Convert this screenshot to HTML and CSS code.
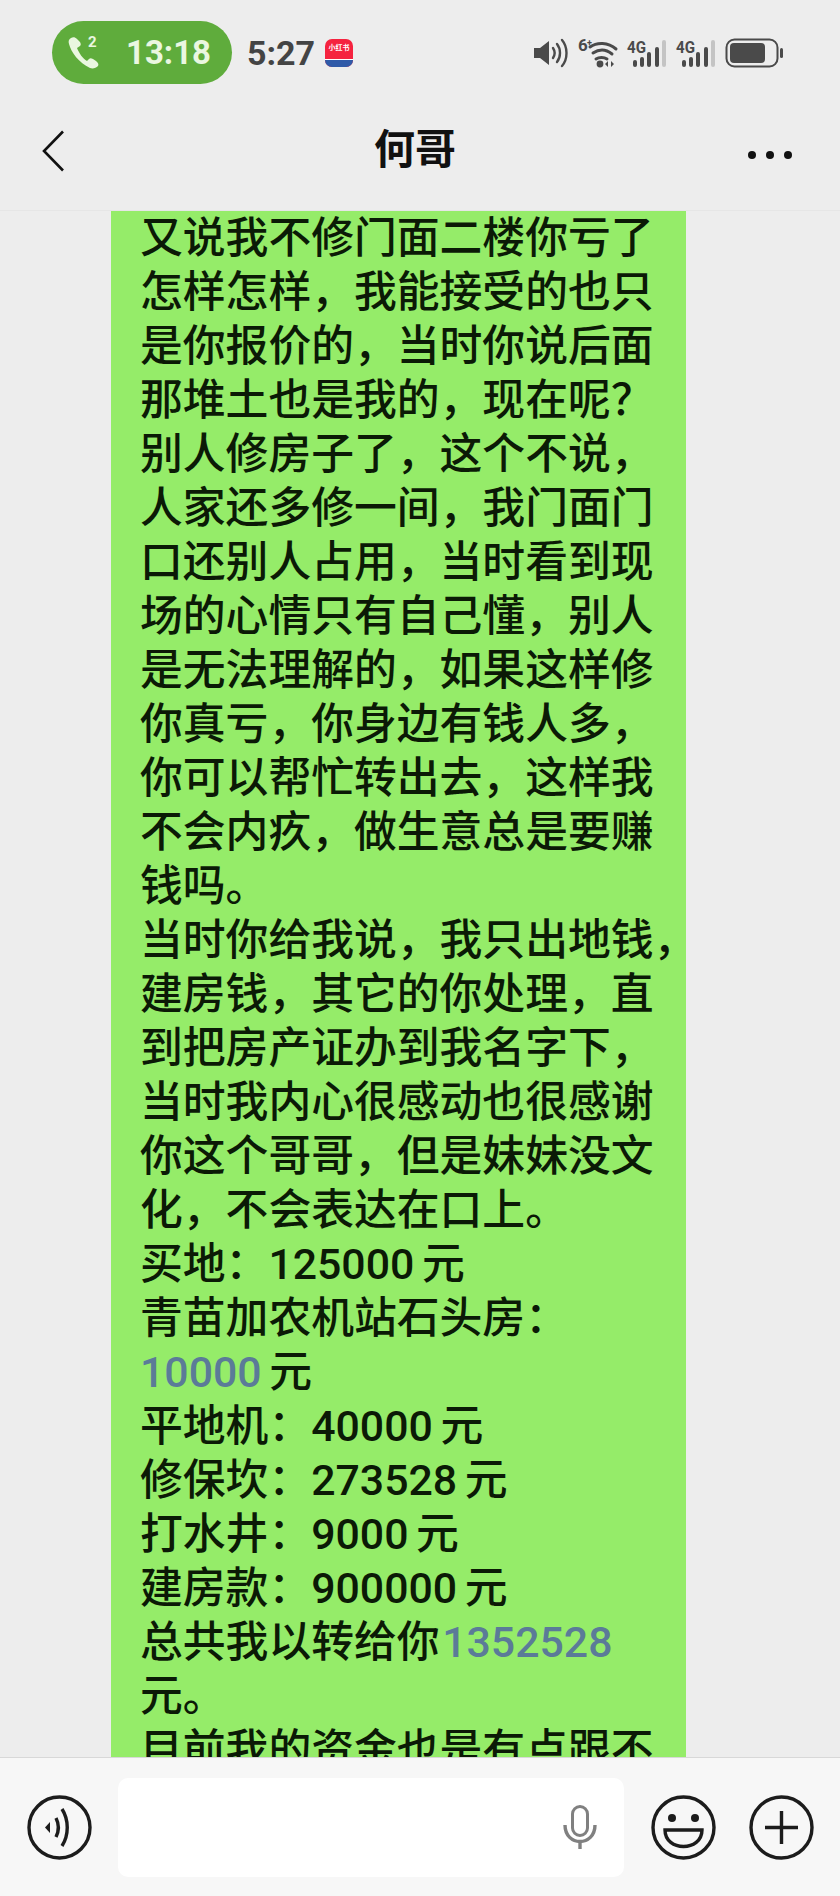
FILE: index.html
```html
<!DOCTYPE html>
<html lang="zh-CN">
<head>
    <meta charset="UTF-8">
    <meta name="viewport" content="width=device-width, initial-scale=1.0">
    <title>何哥</title>
    <link rel="stylesheet" href="styles.css">
</head>
<body>
    <div class="phone">
        <div class="status-bar">
            <div class="call-pill">
                <svg class="call-icon" viewBox="0 0 36 36" width="36" height="36">
                    <path d="M5 3c-2 1-3 3-2 6 2 8 10 19 21 24 3 1 6 0 8-2 1-2 0-3-2-5l-3-2c-2-1-3-1-4 0l-2 2c-4-2-8-8-10-13l3-2c1-1 1-2 0-4L11 4C9 2 7 2 5 3z" fill="#eaf7e0"/>
                </svg>
                <span class="call-sim">2</span>
                <span class="call-time">13:18</span>
            </div>
            <span class="clock">5:27</span>
            <div class="app-badge">
                <span class="app-badge-text">小红书</span>
                <span class="app-badge-strip"></span>
            </div>
            <div class="status-icons">
                <svg viewBox="0 0 36 30" width="36" height="30">
                    <path d="M1 10h6l9-7v24l-9-7H1z" fill="#4a4a4a"/>
                    <path d="M20 10c2 3 2 7 0 10M24 6c4 5 4 13 0 18M29 2c6 7 6 19 0 26" fill="none" stroke="#4a4a4a" stroke-width="2.4" stroke-linecap="round"/>
                </svg>
                <svg class="wifi" viewBox="0 0 40 30" width="40" height="30">
                    <text x="0" y="13" class="icon-label">6</text>
                    <text x="9" y="8" class="icon-plus">+</text>
                    <path d="M12 9c7-5 18-5 26 2M15 15c6-4 13-4 19 1M18 21c3-2 8-2 11 0" fill="none" stroke="#4a4a4a" stroke-width="3" stroke-linecap="round"/>
                    <circle cx="22" cy="26" r="3.4" fill="#4a4a4a"/>
                    <path d="M30 23l-3 3 3 3zM33 23l3 3-3 3z" fill="#4a4a4a"/>
                </svg>
                <svg viewBox="0 0 40 30" width="40" height="30">
                    <text x="0" y="15" class="icon-label" textLength="19" lengthAdjust="spacingAndGlyphs">4G</text>
                    <rect x="6" y="22" width="4" height="7" rx="2" fill="#4a4a4a"/>
                    <rect x="13" y="19" width="4" height="10" rx="2" fill="#4a4a4a"/>
                    <rect x="20" y="14" width="4" height="15" rx="2" fill="#4a4a4a"/>
                    <rect x="28" y="9" width="4" height="20" rx="2" fill="#4a4a4a"/>
                    <rect x="35" y="2" width="4" height="27" rx="2" fill="#c4c4c4"/>
                </svg>
                <svg viewBox="0 0 40 30" width="40" height="30">
                    <text x="0" y="15" class="icon-label" textLength="19" lengthAdjust="spacingAndGlyphs">4G</text>
                    <rect x="6" y="22" width="4" height="7" rx="2" fill="#4a4a4a"/>
                    <rect x="13" y="19" width="4" height="10" rx="2" fill="#4a4a4a"/>
                    <rect x="20" y="14" width="4" height="15" rx="2" fill="#4a4a4a"/>
                    <rect x="28" y="9" width="4" height="20" rx="2" fill="#4a4a4a"/>
                    <rect x="35" y="2" width="4" height="27" rx="2" fill="#c4c4c4"/>
                </svg>
                <svg viewBox="0 0 58 30" width="58" height="30">
                    <rect x="1.5" y="1.5" width="51" height="27" rx="8" fill="none" stroke="#4a4a4a" stroke-width="2"/>
                    <rect x="5" y="5" width="35" height="20" rx="4" fill="#4a4a4a"/>
                    <rect x="55" y="10" width="3" height="10" rx="1.5" fill="#4a4a4a"/>
                </svg>
            </div>
        </div>

        <div class="nav-bar">
            <svg class="back" viewBox="0 0 24 42" width="24" height="42">
                <path d="M22 1.5L3 21l19 19.5" fill="none" stroke="#111" stroke-width="2.6"/>
            </svg>
            <h1>何哥</h1>
            <div class="more"><span></span><span></span><span></span></div>
        </div>

        <div class="chat">
            <div class="bubble">
                又说我不修门面二楼你亏了<br>
                怎样怎样，我能接受的也只<br>
                是你报价的，当时你说后面<br>
                那堆土也是我的，现在呢？<br>
                别人修房子了，这个不说，<br>
                人家还多修一间，我门面门<br>
                口还别人占用，当时看到现<br>
                场的心情只有自己懂，别人<br>
                是无法理解的，如果这样修<br>
                你真亏，你身边有钱人多，<br>
                你可以帮忙转出去，这样我<br>
                不会内疚，做生意总是要赚<br>
                钱吗。<br>
                当时你给我说，我只出地钱，<br>
                建房钱，其它的你处理，直<br>
                到把房产证办到我名字下，<br>
                当时我内心很感动也很感谢<br>
                你这个哥哥，但是妹妹没文<br>
                化，不会表达在口上。<br>
                买地：125000 元<br>
                青苗加农机站石头房：<br>
                <span class="num-link">10000</span> 元<br>
                平地机：40000 元<br>
                修保坎：273528 元<br>
                打水井：9000 元<br>
                建房款：900000 元<br>
                总共我以转给你 <span class="num-link num-tight">1352528</span><br>
                元。<br>
                目前我的资金也是有点跟不
            </div>
        </div>

        <div class="composer">
            <svg class="round-btn" viewBox="0 0 65 65" width="65" height="65">
                <circle cx="32.5" cy="32.5" r="30.5" fill="none" stroke="#1c1c1c" stroke-width="3.4"/>
                <path d="M18 32.5l5-5.5v11z" fill="#1c1c1c"/>
                <path d="M29 23c3 6 3 13 0 19M35 14c7 11 7 26 0 37" fill="none" stroke="#1c1c1c" stroke-width="3.4"/>
            </svg>
            <div class="input-box">
                <svg viewBox="0 0 34 44" width="34" height="44">
                    <rect x="9.5" y="1.5" width="15" height="29" rx="7.5" fill="none" stroke="#808080" stroke-width="3"/>
                    <path d="M2 20c0 22 30 22 30 0" fill="none" stroke="#808080" stroke-width="3.4"/>
                    <path d="M17 35v9" stroke="#808080" stroke-width="3.4"/>
                </svg>
            </div>
            <svg class="round-btn" viewBox="0 0 65 65" width="65" height="65">
                <circle cx="32.5" cy="32.5" r="30.5" fill="none" stroke="#1c1c1c" stroke-width="3.4"/>
                <circle cx="21" cy="23" r="4" fill="#1c1c1c"/>
                <circle cx="44" cy="23" r="4" fill="#1c1c1c"/>
                <path d="M14 35h37c0 22-37 22-37 0z" fill="none" stroke="#1c1c1c" stroke-width="3.4"/>
            </svg>
            <svg class="round-btn" viewBox="0 0 65 65" width="65" height="65">
                <circle cx="32.5" cy="32.5" r="30.5" fill="none" stroke="#1c1c1c" stroke-width="3.4"/>
                <path d="M16 32.5h33M32.5 16v33" stroke="#1c1c1c" stroke-width="3.4"/>
            </svg>
        </div>
    </div>
</body>
</html>
```
FILE: styles.css
```css
* {
    margin: 0;
    padding: 0;
    box-sizing: border-box;
}

body {
    width: 840px;
    height: 1896px;
    overflow: hidden;
    background-color: #ededed;
    font-family: Roboto, "Noto Sans CJK SC", sans-serif;
}

.phone {
    display: flex;
    flex-direction: column;
    height: 1896px;
}

.status-bar {
    display: flex;
    align-items: center;
    height: 84px;
    padding: 21px 57px 0 52px;
    flex-shrink: 0;
}

.call-pill {
    position: relative;
    display: flex;
    align-items: center;
    width: 180px;
    height: 63px;
    padding-left: 14px;
    border-radius: 32px;
    background-color: #5fac3c;
    color: #eaf7e0;
}

.call-sim {
    position: absolute;
    left: 36px;
    top: 12px;
    font-size: 15px;
    font-weight: 700;
}

.call-time {
    margin-left: 24px;
    font-size: 33px;
    font-weight: 700;
}

.clock {
    margin-left: 15px;
    font-size: 34px;
    font-weight: 700;
    color: #444;
}

.app-badge {
    position: relative;
    overflow: hidden;
    width: 28px;
    height: 28px;
    margin-left: 10px;
    border-radius: 7px;
    background-color: #f5233f;
    text-align: center;
}

.app-badge-text {
    display: block;
    margin-top: 5px;
    font-size: 7px;
    font-weight: 700;
    line-height: 9px;
    white-space: nowrap;
    color: #fff;
}

.app-badge-strip {
    position: absolute;
    left: 0;
    right: 0;
    bottom: 0;
    height: 8px;
    border-top: 1px solid #fff;
    background-color: #2f5aa8;
}

.status-icons {
    display: flex;
    align-items: center;
    gap: 9px;
    margin-left: auto;
}

.status-icons svg {
    overflow: visible;
}

.icon-label {
    font-size: 17px;
    font-weight: 700;
    fill: #4a4a4a;
}

.icon-plus {
    font-size: 9px;
    font-weight: 700;
    fill: #4a4a4a;
}

.nav-bar {
    display: grid;
    grid-template-columns: 1fr auto 1fr;
    align-items: center;
    height: 127px;
    padding: 8px 48px 0 41px;
    border-bottom: 1px solid #e6e6e6;
    flex-shrink: 0;
}

.nav-bar h1 {
    margin: 0 3px 10px 0;
    font-size: 41px;
    font-weight: 700;
    color: #111;
}

.more {
    display: flex;
    justify-self: end;
    gap: 10px;
    margin-top: 8px;
}

.more span {
    width: 8px;
    height: 8px;
    border-radius: 50%;
    background-color: #111;
}

.chat {
    flex: 1;
    overflow: hidden;
    min-height: 0;
}

.bubble {
    width: 575px;
    margin-left: 111px;
    padding: 0 0 40px 29px;
    background-color: #95ec69;
    color: #0b1a06;
    font-size: 42.8px;
    font-weight: 500;
    line-height: 54px;
    white-space: nowrap;
    word-spacing: -3px;
}

.num-link {
    color: #5b7b98;
}

.num-tight {
    margin-left: -5px;
}

.composer {
    display: flex;
    align-items: center;
    height: 139px;
    padding: 0 26px 0 27px;
    border-top: 1px solid #d8d8d8;
    background-color: #f7f7f7;
    flex-shrink: 0;
}

.input-box {
    display: flex;
    align-items: center;
    justify-content: flex-end;
    width: 506px;
    height: 99px;
    margin: 0 27px 0 26px;
    padding-right: 27px;
    border-radius: 10px;
    background-color: #fff;
}

.round-btn {
    flex-shrink: 0;
}

.round-btn:last-child {
    margin-left: 33px;
}
```
